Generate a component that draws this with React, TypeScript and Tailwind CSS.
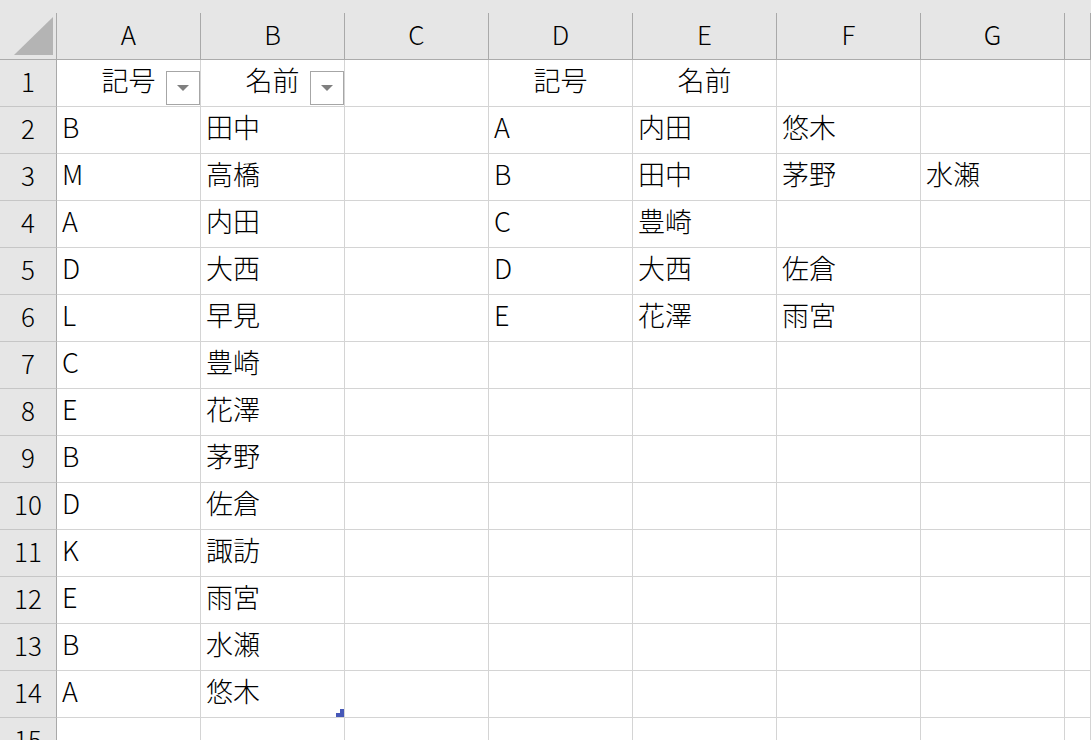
import React from 'react';

const COLS = ['A', 'B', 'C', 'D', 'E', 'F', 'G', ''];

const colA = ['B', 'M', 'A', 'D', 'L', 'C', 'E', 'B', 'D', 'K', 'E', 'B', 'A'];
const colB = ['田中', '高橋', '内田', '大西', '早見', '豊崎', '花澤', '茅野', '佐倉', '諏訪', '雨宮', '水瀬', '悠木'];

// 右側の集計表 (D〜G, 2〜6行目)
const summary: string[][] = [
    ['A', '内田', '悠木', ''],
    ['B', '田中', '茅野', '水瀬'],
    ['C', '豊崎', '', ''],
    ['D', '大西', '佐倉', ''],
    ['E', '花澤', '雨宮', ''],
];

function FilterButton() {
    return (
        <div className="absolute right-0 bottom-[1px] w-[34px] h-[34px] bg-white border border-[#a6a6a6] flex items-center justify-center">
            <div className="w-0 h-0 border-l-[6px] border-r-[6px] border-t-[6px] border-l-transparent border-r-transparent border-t-[#7f7f7f]" />
        </div>
    );
}

function HeaderCell({ children }: { children?: React.ReactNode }) {
    return (
        <div className="flex h-[60px] bg-[#e6e6e6] border-b border-[#ababab]">
            <div className="flex-1 pt-[13px] pb-[6px] flex items-center justify-center text-[26px] font-light text-black">{children}</div>
            <div className="w-px mt-[13px] bg-[#a9a9a9]" />
        </div>
    );
}

function RowHeader({ n }: { n: number }) {
    return (
        <div className="h-[47px] pb-[6px] bg-[#e6e6e6] border-r border-[#a9a9a9] border-b border-b-[#c6c6c6] flex items-center justify-center text-[26px] font-light text-black">
            {n}
        </div>
    );
}

function Cell({ text, center, filter, handle }: { text?: string; center?: boolean; filter?: boolean; handle?: boolean }) {
    return (
        <div className={`relative h-[47px] pb-[6px] border-r border-b border-[#d4d4d4] flex items-center text-[27px] font-light text-black whitespace-nowrap ${center ? 'justify-center' : 'pl-[5px]'}`}>
            {text}
            {filter && <FilterButton />}
            {handle && (
                <div className="absolute right-0 bottom-0 w-2 h-2">
                    <div className="absolute right-0 top-0 w-1 h-1 bg-[#4658b8]" />
                    <div className="absolute left-0 right-0 bottom-0 h-1 bg-[#4658b8]" />
                </div>
            )}
        </div>
    );
}

export default function App() {
    const rows = Array.from({ length: 15 }, (_, i) => i + 1);
    return (
        <div
            className="w-[1091px] h-[740px] overflow-hidden bg-white"
            style={{ fontFamily: '"Noto Sans CJK JP", "Noto Sans", sans-serif' }}
        >
            <div className="grid grid-cols-[57px_repeat(7,144px)_1fr]">
                {/* 列見出し */}
                <div className="flex h-[60px] bg-[#e6e6e6] border-b border-[#ababab]">
                    <div className="flex-1 pt-[17px] pl-[14px]">
                        <svg width="39" height="38" viewBox="0 0 39 38">
                            <polygon points="39,0 39,38 0,38" fill="#b4b4b4" />
                        </svg>
                    </div>
                    <div className="w-px mt-[13px] bg-[#a9a9a9]" />
                </div>
                {COLS.map((c, i) => (
                    <HeaderCell key={i}>{c}</HeaderCell>
                ))}

                {rows.map(r => {
                    const cells: React.ReactNode[] = [];
                    if (r === 1) {
                        cells.push(<Cell key="a" text="記号" center filter />);
                        cells.push(<Cell key="b" text="名前" center filter />);
                        cells.push(<Cell key="c" />);
                        cells.push(<Cell key="d" text="記号" center />);
                        cells.push(<Cell key="e" text="名前" center />);
                        cells.push(<Cell key="f" />);
                        cells.push(<Cell key="g" />);
                        cells.push(<Cell key="h" />);
                    } else {
                        const s = summary[r - 2] ?? ['', '', '', ''];
                        cells.push(<Cell key="a" text={colA[r - 2]} />);
                        cells.push(<Cell key="b" text={colB[r - 2]} handle={r === 14} />);
                        cells.push(<Cell key="c" />);
                        s.forEach((t, j) => cells.push(<Cell key={'s' + j} text={t} />));
                        cells.push(<Cell key="h" />);
                    }
                    return (
                        <React.Fragment key={r}>
                            <RowHeader n={r} />
                            {cells}
                        </React.Fragment>
                    );
                })}
            </div>
        </div>
    );
}
